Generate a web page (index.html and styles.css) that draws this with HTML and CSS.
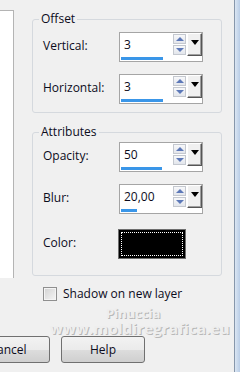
FILE: index.html
```html
<!DOCTYPE html>
<html lang="en">
<head>
    <meta charset="UTF-8">
    <meta name="viewport" content="width=device-width, initial-scale=1.0">
    <title>Drop Shadow</title>
    <link rel="stylesheet" href="styles.css">
</head>
<body>
    <div class="dialog">
        <div class="content">
            <div class="main">
                <div class="preview"></div>
                <div class="settings">
                    <fieldset class="group offset">
                        <legend>Offset</legend>
                        <div class="row">
                            <label>Vertical:</label>
                            <div class="spin">
                                <div class="value"><span>3</span><div class="bar" style="width: 42px"></div></div>
                                <div class="arrows"><span class="up"></span><span class="down"></span></div>
                                <span class="drop"></span>
                            </div>
                        </div>
                        <div class="row">
                            <label>Horizontal:</label>
                            <div class="spin">
                                <div class="value"><span>3</span><div class="bar" style="width: 42px"></div></div>
                                <div class="arrows"><span class="up"></span><span class="down"></span></div>
                                <span class="drop"></span>
                            </div>
                        </div>
                    </fieldset>
                    <fieldset class="group attrs">
                        <legend>Attributes</legend>
                        <div class="row">
                            <label>Opacity:</label>
                            <div class="spin">
                                <div class="value"><span>50</span><div class="bar" style="width: 41px"></div></div>
                                <div class="arrows"><span class="up"></span><span class="down"></span></div>
                                <span class="drop"></span>
                            </div>
                        </div>
                        <div class="row">
                            <label>Blur:</label>
                            <div class="spin">
                                <div class="value"><span>20,00</span><div class="bar" style="width: 16px"></div></div>
                                <div class="arrows"><span class="up"></span><span class="down"></span></div>
                                <span class="drop"></span>
                            </div>
                        </div>
                        <div class="row color-row">
                            <label>Color:</label>
                            <div class="swatch"></div>
                        </div>
                    </fieldset>
                    <div class="check">
                        <span class="box"></span>
                        <span>Shadow on new layer</span>
                    </div>
                </div>
            </div>
            <div class="watermark">
                <span class="wm-name">Pinuccia</span>
                <span class="wm-site">www.moldiregrafica.eu</span>
            </div>
            <div class="buttons">
                <button>Cancel</button>
                <button>Help</button>
            </div>
        </div>
        <div class="frame"></div>
    </div>
</body>
</html>
```

FILE: styles.css
```css
body {
    margin: 0;
    background-color: #f0f0f0;
    font-family: "Open Sans", "Liberation Sans", sans-serif;
    font-size: 12px;
    color: #0c0c1c;
}
.dialog {
    display: flex;
    width: 240px;
    height: 372px;
    overflow: hidden;
}
.content {
    width: 235px;
    display: flex;
    flex-direction: column;
}
.main {
    display: flex;
}
.preview {
    width: 14px;
    height: 268px;
    margin-top: 10px;
    background-color: #fff;
    border-top: 1px solid #b4b4b4;
    border-right: 1px solid #b4b4b4;
    box-sizing: border-box;
}
.settings {
    margin-left: 18px;
    padding-top: 12px;
}
.group {
    width: 190px;
    margin: 0;
    padding: 0 0 0 10px;
    border: 1px solid #d5d9de;
    border-radius: 3px;
    box-sizing: border-box;
    min-width: 0;
}
.group legend {
    margin-left: -4px;
    padding: 0 2px;
    line-height: 14px;
}
.offset {
    padding-top: 6px;
    padding-bottom: 8px;
}
.attrs {
    margin-top: 12px;
    padding-top: 3px;
    padding-bottom: 16px;
}
.row {
    display: flex;
    align-items: center;
    height: 30px;
}
.row label {
    width: 76px;
    margin-top: -3px;
}
.row + .row {
    margin-top: 12px;
}
.attrs .color-row {
    margin-top: 15px;
}
.spin {
    display: flex;
    width: 84px;
    height: 30px;
    background-color: #fff;
    border: 1px solid #a5a5a5;
    box-sizing: border-box;
}
.value {
    width: 53px;
    padding: 4px 0 0 1px;
    display: flex;
    flex-direction: column;
}
.value span {
    padding-left: 3px;
    line-height: 16px;
}
.bar {
    height: 3px;
    margin-top: 4px;
    background-color: #3a96e8;
}
.arrows {
    display: flex;
    flex-direction: column;
    gap: 1px;
    margin-top: 1px;
}
.arrows span {
    width: 13px;
    height: 10px;
    box-sizing: border-box;
    border: 1px solid #c4c8cf;
    background: linear-gradient(#f7f8fa, #e3e6ec);
    display: flex;
    align-items: center;
    justify-content: center;
}
.arrows .up::after,
.arrows .down::after {
    content: "";
    border-left: 4px solid transparent;
    border-right: 4px solid transparent;
}
.arrows .up::after {
    border-bottom: 4px solid #5c78b8;
}
.arrows .down::after {
    border-top: 4px solid #5c78b8;
}
.drop {
    width: 15px;
    height: 23px;
    margin-left: 1px;
    box-sizing: border-box;
    background-color: #f0f0f0;
    border-top: 1px solid #fff;
    border-left: 1px solid #fff;
    border-right: 1px solid #555;
    border-bottom: 1px solid #555;
    box-shadow: inset -1px -1px 0 #a0a0a0;
    display: flex;
    justify-content: center;
    padding-top: 6px;
}
.drop::after {
    content: "";
    width: 0;
    height: 0;
    border-left: 4px solid transparent;
    border-right: 4px solid transparent;
    border-top: 5px solid #000;
}
.swatch {
    width: 68px;
    height: 30px;
    margin-left: -1px;
    box-sizing: border-box;
    background-color: #000;
    border: 1px solid #6e6e6e;
    outline: 1px dotted #fff;
    outline-offset: -4px;
}
.check {
    display: flex;
    align-items: center;
    gap: 6px;
    margin: 11px 0 0 11px;
    line-height: 14px;
}
.check .box {
    width: 14px;
    height: 14px;
    box-sizing: border-box;
    border: 1px solid #8f8f8f;
    background: linear-gradient(135deg, #d2d2d2, #f6f6f6);
    box-shadow: inset 0 0 0 1px #f4f4f4;
}
.watermark {
    height: 35px;
    padding-top: 4px;
    box-sizing: border-box;
    display: flex;
    flex-direction: column;
    font-weight: bold;
    color: #eeeeee;
    text-shadow: 1px 1px 0 #b8b8b8;
}
.wm-name {
    margin-left: 106px;
    font-size: 13px;
    line-height: 16px;
}
.wm-site {
    margin-left: 50px;
    font-size: 15px;
    line-height: 15px;
    letter-spacing: 0.2px;
}
.buttons {
    display: flex;
    gap: 11px;
    margin-left: -34px;
}
.buttons button {
    width: 84px;
    height: 27px;
    border: 1px solid #707070;
    border-radius: 3px;
    background: linear-gradient(#f2f2f2 0%, #ebebeb 50%, #dddddd 51%, #cfcfcf 100%);
    font-family: "Open Sans", "Liberation Sans", sans-serif;
    font-size: 12px;
    color: #0c0c1c;
    padding: 0;
}
.frame {
    width: 5px;
    border-left: 1px solid #8797ab;
    background: linear-gradient(90deg, #dbe6f3, #b9cde6);
}
```
